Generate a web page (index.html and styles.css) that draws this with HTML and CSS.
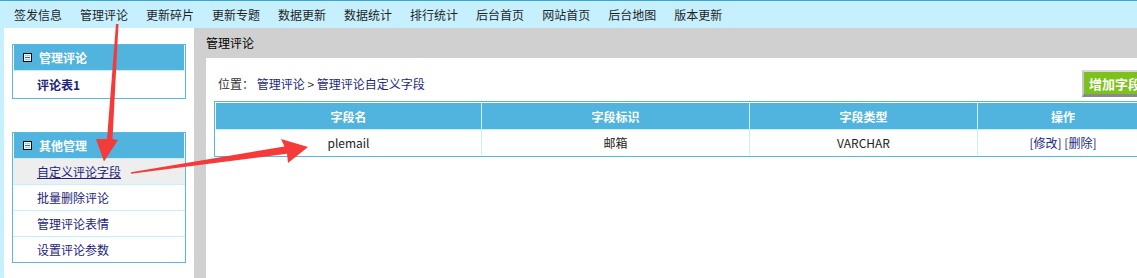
FILE: index.html
```html
<!DOCTYPE html>
<html lang="zh-CN">
<head>
<meta charset="utf-8">
<title>管理评论</title>
<link rel="stylesheet" href="styles.css">
</head>
<body>
<div class="topbar">
  <a class="nav-item">签发信息</a>
  <a class="nav-item">管理评论</a>
  <a class="nav-item">更新碎片</a>
  <a class="nav-item">更新专题</a>
  <a class="nav-item">数据更新</a>
  <a class="nav-item">数据统计</a>
  <a class="nav-item">排行统计</a>
  <a class="nav-item">后台首页</a>
  <a class="nav-item">网站首页</a>
  <a class="nav-item">后台地图</a>
  <a class="nav-item">版本更新</a>
</div>
<div class="page">
  <aside class="sidebar">
    <div class="panel">
      <div class="panel-head"><span class="toggle"><span class="toggle-bar"></span></span>管理评论</div>
      <div class="panel-row bold">评论表1</div>
    </div>
    <div class="panel panel-other">
      <div class="panel-head"><span class="toggle"><span class="toggle-bar"></span></span>其他管理</div>
      <div class="panel-row active"><a class="link">自定义评论字段</a></div>
      <div class="panel-row"><a class="link">批量删除评论</a></div>
      <div class="panel-row"><a class="link">管理评论表情</a></div>
      <div class="panel-row"><a class="link">设置评论参数</a></div>
    </div>
  </aside>
  <main class="main">
    <div class="main-title">管理评论</div>
    <div class="content">
      <div class="toolbar">
        <div class="crumb">位置：&nbsp;<a class="crumb-link">管理评论</a> &gt; <a class="crumb-link">管理评论自定义字段</a></div>
        <button class="add-btn">增加字段</button>
      </div>
      <table class="grid">
        <colgroup>
          <col class="c1"><col class="c2"><col class="c3"><col class="c4">
        </colgroup>
        <thead>
          <tr><th>字段名</th><th>字段标识</th><th>字段类型</th><th>操作</th></tr>
        </thead>
        <tbody>
          <tr><td>plemail</td><td>邮箱</td><td>VARCHAR</td><td class="ops"><a class="op">[修改]</a>&nbsp;<a class="op">[删除]</a></td></tr>
        </tbody>
      </table>
    </div>
  </main>
</div>
<svg class="annot" width="1137" height="278" viewBox="0 0 1137 278">
  <polygon fill="#f53a3a" points="116,24 118.5,24 112.5,139 118,140 104,161.5 96,139 107,139"/>
  <polygon fill="#f53a3a" points="131,172.2 284.5,146.5 281,139 308,147 288,163 287,153.8 131,173.8"/>
</svg>
</body>
</html>
```
FILE: styles.css
```css
html, body {
  margin: 0;
  padding: 0;
  overflow: hidden;
  height: 100%;
}
body {
  font-family: "Noto Sans CJK SC", "Noto Sans", sans-serif;
  font-size: 12px;
  color: #222;
  position: relative;
  background: #fff;
}
a { text-decoration: none; cursor: pointer; }

.topbar {
  height: 27px;
  border-top: 1px solid #3aa6d6;
  background: #c7f0ff;
  display: flex;
  align-items: center;
  padding-left: 5px;
  white-space: nowrap;
}
.nav-item {
  padding: 0 9px;
  color: #1f1f1f;
  line-height: 27px;
}

.page {
  display: flex;
  height: calc(100% - 28px);
}
.sidebar {
  flex: none;
  width: 190px;
  border-left: 4px solid #c7f0ff;
  background: #fff;
  padding-top: 16px;
}
.panel {
  width: 172px;
  margin-left: 8px;
  border: 1px solid #5ab8e2;
}
.panel-other { margin-top: 33px; }
.panel-head {
  height: 25px;
  background: #50b4de;
  color: #fff;
  font-weight: bold;
  display: flex;
  align-items: center;
  padding-left: 9px;
  margin: 0 1px;
}
.toggle {
  width: 7px;
  height: 7px;
  border: 1px solid #000;
  background: #e6f6ff;
  margin-right: 7px;
  display: flex;
  align-items: center;
  justify-content: center;
}
.toggle-bar {
  width: 5px;
  height: 1px;
  background: #3470b0;
  box-shadow: 0 -2px 0 0 #9ccde8, 0 2px 0 0 #9ccde8;
}
.panel-row {
  height: 25px;
  line-height: 25px;
  padding-left: 24px;
  border-top: 1px solid #c7f0ff;
  color: #1c2478;
}
.panel-row.bold { font-weight: bold; height: 27px; line-height: 27px; }
.panel-row.active { background: #eeeeee; }
.panel-row.active .link { text-decoration: underline; }
.link { color: #1c2478; }

.main {
  flex: 1;
  background: #d0d0d0;
  padding-left: 12px;
  display: flex;
  flex-direction: column;
  min-width: 0;
}
.main-title {
  height: 30px;
  line-height: 30px;
  color: #000;
  flex: none;
}
.content {
  flex: 1;
  width: 936px;
  background: #fff;
  padding: 12px 8px 0;
}
.toolbar {
  display: flex;
  justify-content: space-between;
  align-items: center;
  height: 27px;
  margin-bottom: 4px;
}
.crumb {
  padding-left: 4px;
  color: #333;
}
.crumb-link { color: #1c2a7a; }
.add-btn {
  font-family: inherit;
  font-size: 13px;
  font-weight: bold;
  color: #fff;
  background: #7cc11c;
  border: none;
  border-left: 2px solid #c8c8c8;
  border-top: 2px solid #d8d8d8;
  border-bottom: 3px solid #8a8a8a;
  height: 27px;
  width: 68px;
  padding: 0 0 0 5px;
  text-align: left;
  white-space: nowrap;
}

.grid {
  width: 936px;
  table-layout: fixed;
  border-collapse: separate;
  border-spacing: 0;
  border: 1px solid #56b6e0;
  padding: 1px;
}
.c1 { width: 266px; }
.c2 { width: 268px; }
.c3 { width: 228px; }
.c4 { width: 170px; }
.grid th {
  height: 26px;
  background: #50b4de;
  color: #fff;
  font-weight: bold;
  border-right: 1px solid #c7f0ff;
  border-bottom: 1px solid #c7f0ff;
  padding: 0;
}
.grid td {
  height: 25px;
  text-align: center;
  color: #222;
  border-right: 1px solid #c7f0ff;
  padding: 0;
}
.grid th:last-child, .grid td:last-child { border-right: none; }
.op { color: #1c2a7a; }

.annot {
  position: absolute;
  left: 0;
  top: 0;
  pointer-events: none;
}
```
